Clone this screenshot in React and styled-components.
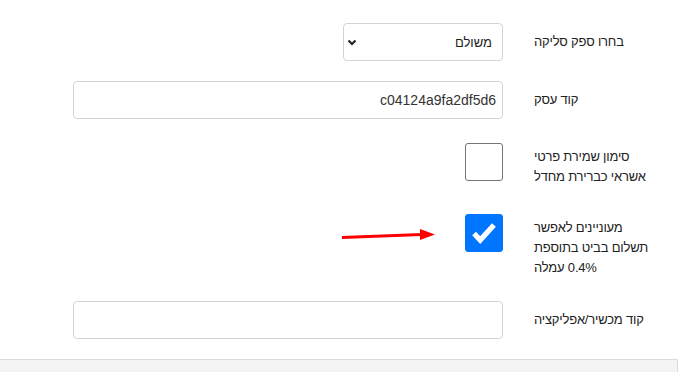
import React from "react";
import styled, { createGlobalStyle } from "styled-components";

const Global = createGlobalStyle`
	html, body {
		margin: 0;
		padding: 0;
		background: #fff;
		overflow: hidden;
	}
	body {
		font-family: "Liberation Sans", Arial, "DejaVu Sans", sans-serif;
		font-size: 14px;
		color: #222;
	}
`;

const Page = styled.div`
	position: relative;
	width: 678px;
	height: 372px;
	overflow: hidden;
	direction: rtl;
`;

const Form = styled.form`
	display: flex;
	flex-direction: column;
	padding: 23px 24px 0 0;
`;

const Row = styled.div`
	display: flex;
	align-items: flex-start;
	margin-top: ${(p) => p.$mt || 0}px;
`;

const Label = styled.label`
	width: 120px;
	margin-left: 31px;
	padding-top: ${(p) => (p.$check ? 4 : 9)}px;
	line-height: 20px;
	font-size: 13px;
	letter-spacing: -0.2px;
	text-align: left;
	color: #222;
`;

const TextInput = styled.input`
	box-sizing: border-box;
	width: 430px;
	height: 38px;
	padding: 0 6px;
	border: 1px solid #d4d4d4;
	border-radius: 4px;
	font: inherit;
	font-size: 14px;
	color: #333;
	text-align: right;
	direction: rtl;
	outline: none;
	background: #fff;
`;

const SelectWrap = styled.div`
	position: relative;
	width: 160px;
	height: 38px;
`;

const Select = styled.select`
	appearance: none;
	box-sizing: border-box;
	width: 100%;
	height: 100%;
	padding: 0 10px 0 24px;
	border: 1px solid #d4d4d4;
	border-radius: 4px;
	background: #fff;
	font: inherit;
	font-size: 13px;
	color: #222;
	direction: rtl;
	outline: none;
`;

const Chevron = styled.svg`
	position: absolute;
	left: 2px;
	top: 16px;
	pointer-events: none;
`;

const Box = styled.span`
	box-sizing: border-box;
	display: flex;
	align-items: center;
	justify-content: center;
	width: 38px;
	height: 38px;
	border-radius: 3px;
	border: 1px solid ${(p) => (p.$checked ? "#0075ff" : "#767676")};
	background: ${(p) => (p.$checked ? "#0075ff" : "#fff")};
`;

const Bar = styled.div`
	margin-top: 20px;
	height: 40px;
	background: #f4f4f4;
	border: 1px solid #dcdcdc;
	border-left: none;
`;

const Pointer = styled.svg`
	position: absolute;
	left: 338px;
	top: 226px;
`;

const Checkbox = ({ checked }) => (
	<Box $checked={checked}>
		{checked && (
			<svg width="38" height="38" viewBox="0 0 38 38">
				<polyline
					points="8.5,19.5 15,26.5 29.5,10.5"
					fill="none"
					stroke="#fff"
					strokeWidth="5.5"
					strokeLinejoin="miter"
				/>
			</svg>
		)}
	</Box>
);

export default function App() {
	return (
		<Page>
			<Global />
			<Form>
				<Row>
					<Label>בחרו ספק סליקה</Label>
					<SelectWrap>
						<Select defaultValue="meshulam">
							<option value="meshulam">משולם</option>
						</Select>
						<Chevron width="14" height="8" viewBox="0 0 14 8">
							<polyline points="3.5,1.5 7,5 10.5,1.5" fill="none" stroke="#222" strokeWidth="2.2" />
						</Chevron>
					</SelectWrap>
				</Row>
				<Row $mt={20}>
					<Label>קוד עסק</Label>
					<TextInput defaultValue="c04124a9fa2df5d6" />
				</Row>
				<Row $mt={24}>
					<Label $check>סימון שמירת פרטי אשראי כברירת מחדל</Label>
					<Checkbox />
				</Row>
				<Row $mt={27}>
					<Label $check>מעוניינים לאפשר תשלום בביט בתוספת 0.4% עמלה</Label>
					<Checkbox checked />
				</Row>
				<Row $mt={23}>
					<Label>קוד מכשיר/אפליקציה</Label>
					<TextInput defaultValue="" />
				</Row>
			</Form>
			<Bar />
			<Pointer width="100" height="20" viewBox="0 0 100 20">
				<line x1="4" y1="11.5" x2="84" y2="8.5" stroke="#ff0000" strokeWidth="3" />
				<polygon points="82,3 97,8.5 82,14" fill="#ff0000" />
			</Pointer>
		</Page>
	);
}
